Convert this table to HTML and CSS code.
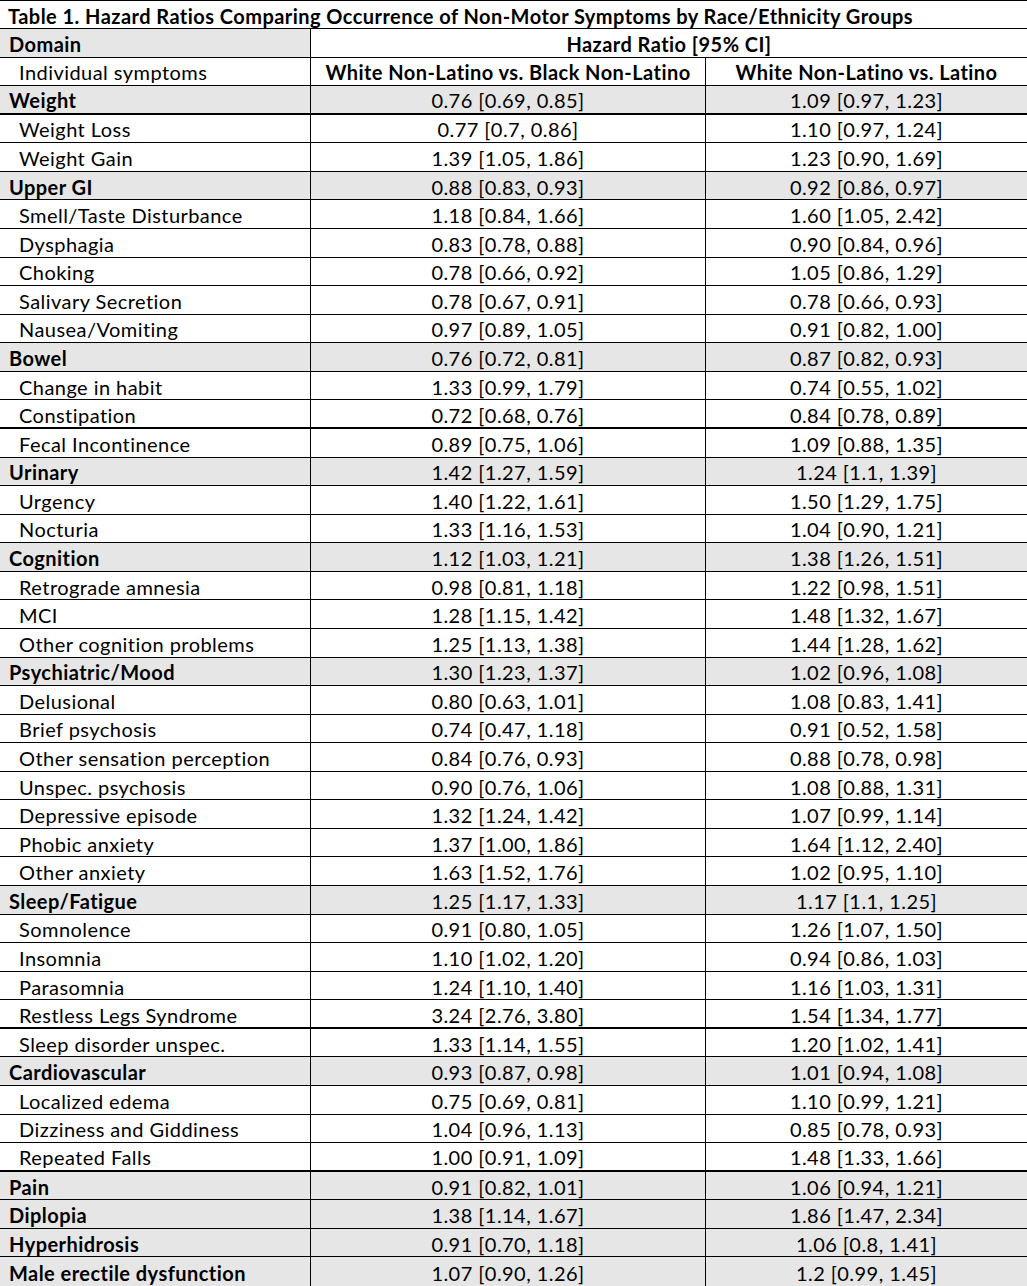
FILE: index.html
```html
<!DOCTYPE html>
<html>
<head>
<meta charset="utf-8">
<link rel="stylesheet" href="styles.css">
</head>
<body>
<table class="hr">
<thead>
<tr class="title"><th class="span3">Table 1. Hazard Ratios Comparing Occurrence of Non-Motor Symptoms by Race/Ethnicity Groups</th></tr>
<tr><th class="name dhead">Domain</th><th class="val span2">Hazard Ratio [95% CI]</th></tr>
<tr><td class="name sub">Individual symptoms</td><th class="val">White Non-Latino vs. Black Non-Latino</th><th class="val">White Non-Latino vs. Latino</th></tr>
</thead>
<tbody>
<tr class="dom thick"><td class="name">Weight</td><td>0.76 [0.69, 0.85]</td><td>1.09 [0.97, 1.23]</td></tr>
<tr><td class="name sub">Weight Loss</td><td>0.77 [0.7, 0.86]</td><td>1.10 [0.97, 1.24]</td></tr>
<tr><td class="name sub">Weight Gain</td><td>1.39 [1.05, 1.86]</td><td>1.23 [0.90, 1.69]</td></tr>
<tr class="dom"><td class="name">Upper GI</td><td>0.88 [0.83, 0.93]</td><td>0.92 [0.86, 0.97]</td></tr>
<tr><td class="name sub">Smell/Taste Disturbance</td><td>1.18 [0.84, 1.66]</td><td>1.60 [1.05, 2.42]</td></tr>
<tr><td class="name sub">Dysphagia</td><td>0.83 [0.78, 0.88]</td><td>0.90 [0.84, 0.96]</td></tr>
<tr><td class="name sub">Choking</td><td>0.78 [0.66, 0.92]</td><td>1.05 [0.86, 1.29]</td></tr>
<tr><td class="name sub">Salivary Secretion</td><td>0.78 [0.67, 0.91]</td><td>0.78 [0.66, 0.93]</td></tr>
<tr><td class="name sub">Nausea/Vomiting</td><td>0.97 [0.89, 1.05]</td><td>0.91 [0.82, 1.00]</td></tr>
<tr class="dom"><td class="name">Bowel</td><td>0.76 [0.72, 0.81]</td><td>0.87 [0.82, 0.93]</td></tr>
<tr><td class="name sub">Change in habit</td><td>1.33 [0.99, 1.79]</td><td>0.74 [0.55, 1.02]</td></tr>
<tr class="thick"><td class="name sub">Constipation</td><td>0.72 [0.68, 0.76]</td><td>0.84 [0.78, 0.89]</td></tr>
<tr><td class="name sub">Fecal Incontinence</td><td>0.89 [0.75, 1.06]</td><td>1.09 [0.88, 1.35]</td></tr>
<tr class="dom"><td class="name">Urinary</td><td>1.42 [1.27, 1.59]</td><td>1.24 [1.1, 1.39]</td></tr>
<tr><td class="name sub">Urgency</td><td>1.40 [1.22, 1.61]</td><td>1.50 [1.29, 1.75]</td></tr>
<tr><td class="name sub">Nocturia</td><td>1.33 [1.16, 1.53]</td><td>1.04 [0.90, 1.21]</td></tr>
<tr class="dom"><td class="name">Cognition</td><td>1.12 [1.03, 1.21]</td><td>1.38 [1.26, 1.51]</td></tr>
<tr><td class="name sub">Retrograde amnesia</td><td>0.98 [0.81, 1.18]</td><td>1.22 [0.98, 1.51]</td></tr>
<tr><td class="name sub">MCI</td><td>1.28 [1.15, 1.42]</td><td>1.48 [1.32, 1.67]</td></tr>
<tr><td class="name sub">Other cognition problems</td><td>1.25 [1.13, 1.38]</td><td>1.44 [1.28, 1.62]</td></tr>
<tr class="dom"><td class="name">Psychiatric/Mood</td><td>1.30 [1.23, 1.37]</td><td>1.02 [0.96, 1.08]</td></tr>
<tr><td class="name sub">Delusional</td><td>0.80 [0.63, 1.01]</td><td>1.08 [0.83, 1.41]</td></tr>
<tr><td class="name sub">Brief psychosis</td><td>0.74 [0.47, 1.18]</td><td>0.91 [0.52, 1.58]</td></tr>
<tr><td class="name sub">Other sensation perception</td><td>0.84 [0.76, 0.93]</td><td>0.88 [0.78, 0.98]</td></tr>
<tr><td class="name sub">Unspec. psychosis</td><td>0.90 [0.76, 1.06]</td><td>1.08 [0.88, 1.31]</td></tr>
<tr><td class="name sub">Depressive episode</td><td>1.32 [1.24, 1.42]</td><td>1.07 [0.99, 1.14]</td></tr>
<tr><td class="name sub">Phobic anxiety</td><td>1.37 [1.00, 1.86]</td><td>1.64 [1.12, 2.40]</td></tr>
<tr><td class="name sub">Other anxiety</td><td>1.63 [1.52, 1.76]</td><td>1.02 [0.95, 1.10]</td></tr>
<tr class="dom"><td class="name">Sleep/Fatigue</td><td>1.25 [1.17, 1.33]</td><td>1.17 [1.1, 1.25]</td></tr>
<tr><td class="name sub">Somnolence</td><td>0.91 [0.80, 1.05]</td><td>1.26 [1.07, 1.50]</td></tr>
<tr><td class="name sub">Insomnia</td><td>1.10 [1.02, 1.20]</td><td>0.94 [0.86, 1.03]</td></tr>
<tr><td class="name sub">Parasomnia</td><td>1.24 [1.10, 1.40]</td><td>1.16 [1.03, 1.31]</td></tr>
<tr class="thick"><td class="name sub">Restless Legs Syndrome</td><td>3.24 [2.76, 3.80]</td><td>1.54 [1.34, 1.77]</td></tr>
<tr><td class="name sub">Sleep disorder unspec.</td><td>1.33 [1.14, 1.55]</td><td>1.20 [1.02, 1.41]</td></tr>
<tr class="dom"><td class="name">Cardiovascular</td><td>0.93 [0.87, 0.98]</td><td>1.01 [0.94, 1.08]</td></tr>
<tr><td class="name sub">Localized edema</td><td>0.75 [0.69, 0.81]</td><td>1.10 [0.99, 1.21]</td></tr>
<tr><td class="name sub">Dizziness and Giddiness</td><td>1.04 [0.96, 1.13]</td><td>0.85 [0.78, 0.93]</td></tr>
<tr class="thick"><td class="name sub">Repeated Falls</td><td>1.00 [0.91, 1.09]</td><td>1.48 [1.33, 1.66]</td></tr>
<tr class="dom"><td class="name">Pain</td><td>0.91 [0.82, 1.01]</td><td>1.06 [0.94, 1.21]</td></tr>
<tr class="dom"><td class="name">Diplopia</td><td>1.38 [1.14, 1.67]</td><td>1.86 [1.47, 2.34]</td></tr>
<tr class="dom"><td class="name">Hyperhidrosis</td><td>0.91 [0.70, 1.18]</td><td>1.06 [0.8, 1.41]</td></tr>
<tr class="dom last"><td class="name">Male erectile dysfunction</td><td>1.07 [0.90, 1.26]</td><td>1.2 [0.99, 1.45]</td></tr>
</tbody>
</table>
</body>
</html>
```
FILE: styles.css
```css
html, body {
  margin: 0;
  padding: 0;
  background: #fff;
}
body {
  font-family: Lato, "Open Sans", "Liberation Sans", sans-serif;
  font-size: 20px;
  letter-spacing: 0.45px;
  color: #000;
}
.hr {
  display: grid;
  grid-template-columns: 310px 395px 322px;
  grid-template-rows: 28px repeat(44, 1fr);
  width: 1027px;
  height: 1286px;
  box-sizing: border-box;
  border-top: 1px solid #000;
  border-spacing: 0;
}
.hr thead, .hr tbody, .hr tr { display: contents; }
.hr th, .hr td {
  display: flex;
  align-items: center;
  justify-content: center;
  padding: 2px 0 0 0;
  min-width: 0;
  box-sizing: border-box;
  border-bottom: 1px solid #000;
  border-left: 1px solid #000;
  white-space: nowrap;
  overflow: hidden;
  line-height: 20px;
}
.hr th { font-weight: 700; }
.hr tr > :first-child { border-left: none; }
.hr .span2 { grid-column: span 2; }
.hr .span3 { grid-column: span 3; }
.hr .title th {
  justify-content: flex-start;
  padding-left: 8px;
}
.hr .name {
  justify-content: flex-start;
  padding-left: 9px;
  font-weight: 700;
}
.hr .name.sub {
  padding-left: 19px;
  font-weight: 400;
}
.hr .dhead { background: #e7e6e6; }
.hr .dom td { background: #e7e6e6; }
.hr .thick td { border-bottom: 2px solid #000; }
.hr .last td { border-bottom: none; }
```
